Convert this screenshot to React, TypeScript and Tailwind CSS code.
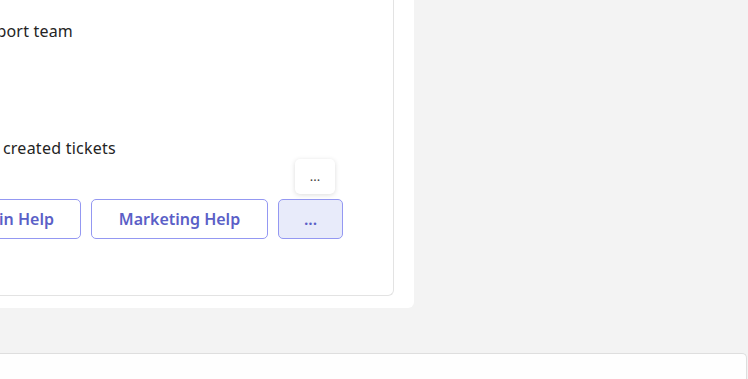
import React from "react";

export default function App() {
  const font = { fontFamily: '"Segoe UI", "Noto Sans", "Open Sans", sans-serif' };
  return (
    <div className="h-[379px] w-[748px] overflow-hidden bg-[#f3f3f3]" style={font}>
      <div className="w-[414px] rounded-br-[6px] bg-white pr-[20px] pb-[12px]">
        <div className="h-[296px] rounded-br-[6px] border-r border-b border-[#e3e3e3] pt-[20px]">
          <div className="flex w-[73px] justify-end whitespace-nowrap text-[16px] leading-[22px] tracking-[0.2px] text-[#242424]">
            Get help from the support team
          </div>
          <div className="mt-[95px] flex w-[116px] justify-end whitespace-nowrap text-[16px] leading-[22px] tracking-[0.25px] text-[#242424]">
            View all of your  created tickets
          </div>
          <div className="mt-[40px] flex w-[343px] justify-end gap-[10px]">
            <button className="h-[40px] shrink-0 whitespace-nowrap rounded-[5px] border border-[#9498f2] bg-white px-[26px] text-[16px] font-semibold text-[#5b5fc7]">
              Admin Help
            </button>
            <button className="h-[40px] w-[177px] shrink-0 whitespace-nowrap rounded-[5px] border border-[#9498f2] bg-white text-[16px] font-semibold text-[#5b5fc7]">
              Marketing Help
            </button>
            <div className="relative shrink-0">
              <button className="h-[40px] w-[65px] rounded-[5px] border border-[#9498f2] bg-[#e8ebfa] text-[16px] font-semibold text-[#5b5fc7]">
                ...
              </button>
              <div className="absolute left-[17px] top-[-40px] flex h-[35px] w-[40px] items-center justify-center rounded-[5px] bg-white text-[13px] text-[#424242] shadow-[0_1px_5px_rgba(0,0,0,0.14)]">
                ...
              </div>
            </div>
          </div>
        </div>
      </div>
      <div className="mt-[45px] h-[40px] w-[747px] rounded-tr-[5px] border-t border-r border-[#dedede] bg-[#fefefe]" />
    </div>
  );
}
